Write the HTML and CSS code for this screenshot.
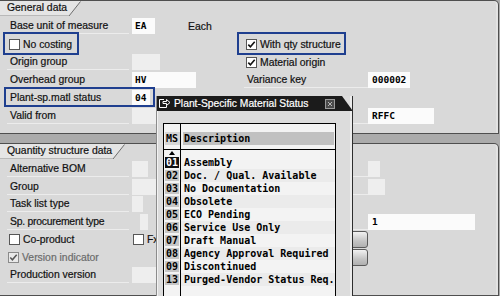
FILE: index.html
```html
<!DOCTYPE html>
<html>
<head>
<meta charset="utf-8">
<link rel="stylesheet" href="styles.css">
</head>
<body>
<div class="screen">
  <section class="group group-top">
    <div class="tab">
      <span class="tab-label">General data</span>
      <svg class="tab-edge" width="12" height="15" viewBox="0 0 12 15"><path d="M0 0H12L0 15Z" fill="#e5e5e5"/><path d="M11.5 0.5L0 15" stroke="#6d6d6d" stroke-width="1" fill="none"/></svg>
    </div>
    <div class="rows rows-top">
      <div class="row">
        <div class="col col-l"><span class="label">Base unit of measure</span><span class="field fill w23">EA</span><span class="unit-text">Each</span></div>
        <div class="col col-r"></div>
      </div>
      <div class="row">
        <div class="col col-l">
          <svg class="cb" width="11" height="11" viewBox="0 0 11 11"><rect x="0.5" y="0.5" width="10" height="10" fill="#fff" stroke="#575757"/></svg>
          <span class="cb-text">No costing</span>
        </div>
        <div class="col col-r">
          <svg class="cb cb-r" width="11" height="11" viewBox="0 0 11 11"><rect x="0.5" y="0.5" width="10" height="10" fill="#fff" stroke="#575757"/><path d="M2.3 5.6L4.4 7.8L8.7 2.8" stroke="#111" stroke-width="1.6" fill="none"/></svg>
          <span class="cb-text">With qty structure</span>
        </div>
        <span class="hl hl-costing"></span>
        <span class="hl hl-qty"></span>
      </div>
      <div class="row">
        <div class="col col-l"><span class="label">Origin group</span><span class="field empty w28"></span></div>
        <div class="col col-r">
          <svg class="cb cb-r" width="11" height="11" viewBox="0 0 11 11"><rect x="0.5" y="0.5" width="10" height="10" fill="#fff" stroke="#575757"/><path d="M2.3 5.6L4.4 7.8L8.7 2.8" stroke="#111" stroke-width="1.6" fill="none"/></svg>
          <span class="cb-text">Material origin</span>
        </div>
      </div>
      <div class="row">
        <div class="col col-l"><span class="label">Overhead group</span><span class="field fill w64">HV</span></div>
        <div class="col col-r"><span class="label label-r">Variance key</span><span class="field fill w42">000002</span></div>
      </div>
      <div class="row">
        <div class="col col-l"><span class="label">Plant-sp.matl status</span><span class="field fill w18">04</span></div>
        <div class="col col-r"></div>
        <span class="hl hl-status"></span>
      </div>
      <div class="row">
        <div class="col col-l"><span class="label">Valid from</span><span class="field empty w40"></span></div>
        <div class="col col-r"><span class="label label-r"></span><span class="field fill w66">RFFC</span></div>
      </div>
    </div>
  </section>

  <section class="group group-bottom">
    <div class="tab">
      <span class="tab-label tab-label-q">Quantity structure data</span>
      <svg class="tab-edge" width="12" height="15" viewBox="0 0 12 15"><path d="M0 0H12L0 15Z" fill="#e5e5e5"/><path d="M11.5 0.5L0 15" stroke="#6d6d6d" stroke-width="1" fill="none"/></svg>
    </div>
    <div class="rows rows-bottom">
      <div class="row">
        <div class="col col-l"><span class="label">Alternative BOM</span><span class="field empty w16"></span></div>
        <div class="col col-r"><span class="label label-r"></span><span class="field empty w12"></span></div>
      </div>
      <div class="row">
        <div class="col col-l"><span class="label">Group</span><span class="field empty w24"></span></div>
        <div class="col col-r"><span class="label label-r"></span><span class="field empty w17"></span></div>
      </div>
      <div class="row">
        <div class="col col-l"><span class="label">Task list type</span><span class="field empty w11"></span></div>
        <div class="col col-r"></div>
      </div>
      <div class="row">
        <div class="col col-l"><span class="label label-tight">Sp. procurement type</span><span class="field empty w8 shift8"></span></div>
        <div class="col col-r"><span class="label label-r"></span><span class="field fill w106">1</span></div>
      </div>
      <div class="row">
        <div class="col col-l">
          <span class="cb-pair">
            <svg class="cb" width="11" height="11" viewBox="0 0 11 11"><rect x="0.5" y="0.5" width="10" height="10" fill="#fff" stroke="#575757"/></svg>
            <span class="cb-text">Co-product</span>
          </span>
          <svg class="cb cb-fx" width="11" height="11" viewBox="0 0 11 11"><rect x="0.5" y="0.5" width="10" height="10" fill="#fff" stroke="#575757"/></svg>
          <span class="cb-text">Fx</span>
        </div>
        <div class="col col-r"><span class="btn"></span></div>
      </div>
      <div class="row">
        <div class="col col-l">
          <svg class="cb cb-dis" width="11" height="11" viewBox="0 0 11 11"><rect x="0.5" y="0.5" width="10" height="10" fill="#e9e9e9" stroke="#8a8a8a"/><path d="M2.3 5.6L4.4 7.8L8.7 2.8" stroke="#555" stroke-width="1.5" fill="none"/></svg>
          <span class="cb-text cb-text-dis">Version indicator</span>
        </div>
        <div class="col col-r"><span class="btn"></span></div>
      </div>
      <div class="row">
        <div class="col col-l"><span class="label">Production version</span><span class="field empty w24"></span></div>
        <div class="col col-r"></div>
      </div>
    </div>
  </section>

  <div class="popup">
    <div class="titlebar">
      <svg class="tb-icon" width="13" height="11" viewBox="0 0 13 11"><path d="M6 1.5H1.5V9.5H8.5V7.5" stroke="#fff" stroke-width="1" fill="none"/><path d="M5 3.5H8.5V1.5L12 4.5L8.5 7.5V5.5H5Z" stroke="#fff" stroke-width="1" fill="none" stroke-linejoin="round"/></svg>
      <span class="title">Plant-Specific Material Status</span>
      <svg class="tb-close" width="10" height="10" viewBox="0 0 10 10"><rect x="0.5" y="0.5" width="9" height="9" fill="#4a4a4a" stroke="#9a9a9a"/><path d="M3 3L7 7M7 3L3 7" stroke="#b5b5b5" stroke-width="1" fill="none"/></svg>
    </div>
    <div class="popup-body">
      <div class="table">
        <div class="trow t-pad"><div class="ms"></div><div class="desc"></div></div>
        <div class="trow t-head"><div class="ms"><span class="ms-h">MS</span></div><div class="desc"><span class="desc-h">Description</span></div></div>
        <div class="trow t-gap"><div class="ms"></div><div class="desc"></div></div>
        <div class="trow t-sort"><div class="ms"><svg width="6" height="4" viewBox="0 0 6 4"><path d="M0 4L3 0L6 4Z" fill="#000"/></svg></div><div class="desc"></div></div>
        <div class="trow t-data"><div class="ms"><span class="code code-sel">01</span></div><div class="desc">Assembly</div></div>
        <div class="trow t-data"><div class="ms"><span class="code">02</span></div><div class="desc">Doc. / Qual. Available</div></div>
        <div class="trow t-data"><div class="ms"><span class="code">03</span></div><div class="desc">No Documentation</div></div>
        <div class="trow t-data"><div class="ms"><span class="code">04</span></div><div class="desc">Obsolete</div></div>
        <div class="trow t-data"><div class="ms"><span class="code">05</span></div><div class="desc">ECO Pending</div></div>
        <div class="trow t-data"><div class="ms"><span class="code">06</span></div><div class="desc">Service Use Only</div></div>
        <div class="trow t-data"><div class="ms"><span class="code">07</span></div><div class="desc">Draft Manual</div></div>
        <div class="trow t-data"><div class="ms"><span class="code">08</span></div><div class="desc">Agency Approval Required</div></div>
        <div class="trow t-data"><div class="ms"><span class="code">09</span></div><div class="desc">Discontinued</div></div>
        <div class="trow t-data"><div class="ms"><span class="code">13</span></div><div class="desc">Purged-Vendor Status Req.</div></div>
        <div class="trow t-rest"><div class="ms"></div><div class="desc"></div></div>
      </div>
    </div>
  </div>
</div>
</body>
</html>
```

FILE: styles.css
```css
* { box-sizing: border-box; }

body {
  margin: 0;
  width: 500px;
  height: 296px;
  overflow: hidden;
  background: #ababab;
  font-family: "Liberation Sans", Arial, sans-serif;
  font-size: 10.4px;
  color: #111;
  -webkit-text-stroke: 0.2px #111;
}

.screen {
  position: relative;
  width: 500px;
  height: 296px;
  display: flex;
  flex-direction: column;
  gap: 9px;
}

.group {
  width: 499px;
  background: #d9d9d9;
  border: 1px solid #4f4f4f;
  border-left: 0;
  border-radius: 0 5px 0 0;
  box-shadow: inset -2px 0 0 #e3e3e3;
}

.group-top { height: 134px; }
.group-bottom { height: 153px; }

.tab {
  display: flex;
  height: 15px;
}

.tab-label {
  display: block;
  width: 69px;
  height: 15px;
  line-height: 14px;
  padding-left: 7px;
  background: #e5e5e5;
  border-bottom: 1px solid #b9b9b9;
  white-space: nowrap;
}

.tab-label-q { width: 113px; }

.tab-edge { display: block; }

.rows { padding-top: 1px; }

.row {
  position: relative;
  display: flex;
  align-items: center;
}

.rows-top .row { height: 18px; }
.rows-bottom .row { height: 17.7px; }

.col {
  display: flex;
  align-items: center;
  height: 100%;
}

.col-l { width: 244px; flex: none; }
.col-r { flex: 1; }

.label {
  display: block;
  width: 122px;
  height: 16px;
  line-height: 15px;
  margin-left: 7px;
  padding-left: 3px;
  border-bottom: 1px solid #ececec;
  white-space: nowrap;
  flex: none;
}

.label-r {
  width: 124px;
  margin-left: 0;
}

.label-tight { letter-spacing: -0.25px; }

.field {
  display: block;
  height: 16px;
  line-height: 16px;
  margin-left: 3px;
  padding-left: 3px;
  font-family: "DejaVu Sans Mono", "Liberation Mono", monospace;
  font-size: 9.5px;
  font-weight: bold;
  color: #000;
  -webkit-text-stroke: 0;
  flex: none;
}

.col-r .field { margin-left: 0; padding-left: 4px; }

.fill { background: #fbfbfb; }
.empty { background: #eeeeee; }

.w8 { width: 8px; }
.w11 { width: 11px; }
.w12 { width: 12px; }
.w16 { width: 16px; }
.w17 { width: 17px; }
.w18 { width: 18px; }
.w23 { width: 23px; }
.w24 { width: 24px; }
.w28 { width: 28px; }
.w40 { width: 40px; }
.w42 { width: 42px; }
.w64 { width: 64px; }
.w66 { width: 66px; }
.w106 { width: 107px; }

.shift8 { margin-left: 11px; }

.unit-text { margin-left: 33px; }

.cb {
  display: block;
  flex: none;
  margin-left: 9px;
}

.cb-r { margin-left: 2px; }

.cb-text {
  margin-left: 3px;
  white-space: nowrap;
}

.cb-text-dis { color: #6b6b6b; -webkit-text-stroke: 0.2px #6b6b6b; }
.cb-dis { margin-left: 8px; }

.cb-pair {
  display: flex;
  align-items: center;
  width: 133px;
  flex: none;
}

.cb-fx { margin-left: 0; }

.btn {
  display: block;
  width: 26px;
  height: 17px;
  margin-left: 98px;
  background: linear-gradient(#f2f2f2, #c4c4c4 60%, #b0b0b0);
  border: 1px solid #5a5a5a;
  border-radius: 0 3px 3px 0;
}

.hl {
  position: absolute;
  border: 2px solid #1f3f8f;
}

.hl-costing { left: 3px; top: -3px; width: 76px; height: 23px; }
.hl-qty { left: 237px; top: -3px; width: 109px; height: 23px; }
.hl-status { left: 4px; top: -2px; width: 151px; height: 20px; }

/* popup */
.popup {
  position: absolute;
  left: 156px;
  top: 96px;
  width: 197px;
  height: 200px;
  overflow: hidden;
  background: #dcdcdc;
  border-left: 1px solid #8c8c8c;
  border-right: 1px solid #2e2e2e;
  box-shadow: inset 1px 0 0 #f2f2f2, inset -2px 0 0 #ececec;
}

.titlebar {
  display: flex;
  align-items: center;
  height: 15px;
  background: #1b1b1b;
  clip-path: polygon(0 0, calc(100% - 11px) 0, 100% 100%, 0 100%);
  margin-left: -1px;
  margin-right: -1px;
}

.tb-icon { display: block; margin-left: 2px; flex: none; }

.title {
  margin-left: 3px;
  color: #fff;
  font-size: 10.3px;
  white-space: nowrap;
  -webkit-text-stroke: 0.2px #fff;
}

.tb-close { display: block; margin-left: auto; margin-right: 18px; flex: none; }

.popup-body {
  padding: 12px 0 0 6px;
}

.table {
  width: 173px;
  height: 190px;
  border: 1px solid #000;
  background: #f3f3f3;
  font-family: "DejaVu Sans Mono", "Liberation Mono", monospace;
  font-size: 10px;
  font-weight: bold;
  color: #000;
  -webkit-text-stroke: 0;
}

.trow {
  display: flex;
}

.ms {
  width: 17px;
  flex: none;
  border-right: 1px solid #000;
  display: flex;
  justify-content: center;
  align-items: center;
}

.desc {
  flex: 1;
  padding-left: 3px;
  white-space: nowrap;
  overflow: hidden;
}

.t-pad { height: 8px; }
.t-head { height: 13px; }
.t-gap { height: 4px; }
.t-sort { height: 7px; border-top: 1px solid #000; }
.t-sort .ms { align-items: flex-start; padding-top: 1px; }
.t-rest { height: 20px; }

.ms-h {
  display: block;
  width: 15px;
  height: 13px;
  line-height: 13px;
  text-align: center;
  background: #d6d6d6;
}

.t-head .desc { padding-left: 2px; padding-right: 1px; }

.desc-h {
  display: block;
  height: 13px;
  line-height: 13px;
  padding-left: 1px;
  background: #c1c1c1;
}

.t-data { height: 13px; }
.t-data:nth-of-type(even) .desc { background: #ebebeb; }
.t-data .desc { line-height: 13px; }

.code {
  display: block;
  width: 14px;
  height: 11px;
  line-height: 11px;
  text-align: center;
  background: #c6c6c6;
}

.code-sel {
  background: #111;
  color: #fff;
}
```
